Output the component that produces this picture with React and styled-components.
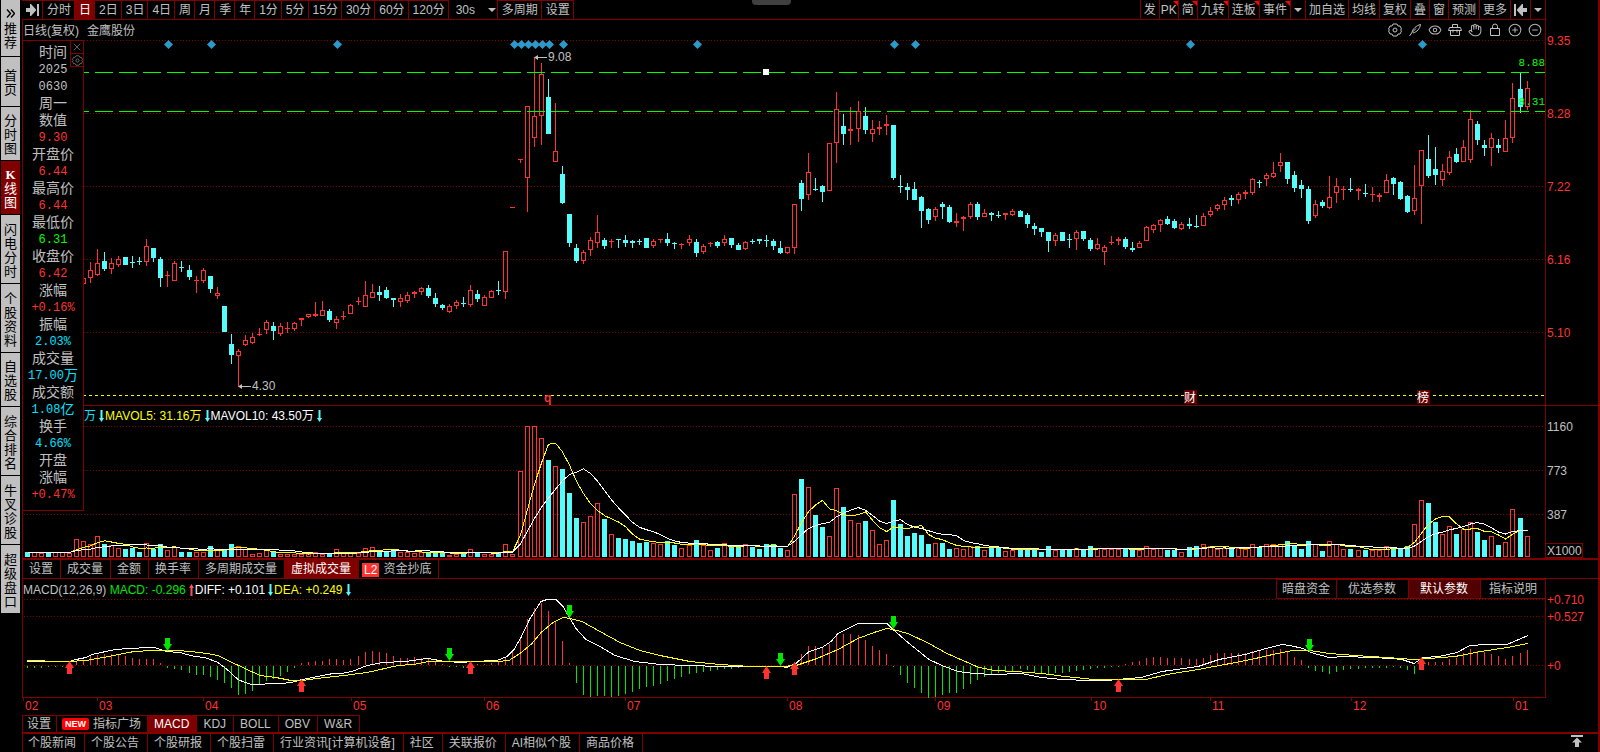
import { useLayoutEffect, useRef, useState } from 'react'
import styled, { createGlobalStyle } from 'styled-components'
import { Eye, Hand, CirclePlus, CircleMinus, X } from 'lucide-react'

const RED = '#ff3232'
const CYAN = '#54fcfc'
const GREEN = '#00e600'
const LINE = '#800000'
const GRAY = '#c0c0c0'

const GlobalStyle = createGlobalStyle`
  * {
    box-sizing: border-box;
  }
  body {
    margin: 0;
    background: #000;
    color: ${GRAY};
    font: 12px/18px "Liberation Sans", "Noto Sans CJK SC", sans-serif;
  }
  button {
    margin: 0;
    padding: 0;
    border: 0;
    background: none;
    color: inherit;
    font: inherit;
    white-space: nowrap;
    cursor: pointer;
  }
`

const Page = styled.div`
  display: flex;
  min-height: 100vh;
  background: #000;
  border-right: 2px solid ${LINE};
`

const Rail = styled.nav`
  flex: none;
  width: 22px;
  padding: 0 2px 0 1px;
`

const RailButton = styled.button`
  display: flex;
  flex-direction: column;
  align-items: center;
  justify-content: center;
  width: 19px;
  height: ${p => p.$height}px;
  padding-top: 3px;
  border-bottom: 1px solid #000;
  background: ${p => (p.$active ? LINE : GRAY)};
  color: ${p => (p.$active ? '#fff' : '#000')};
  font-size: 13px;
  line-height: 14px;

  b {
    font-family: "Liberation Serif", serif;
  }
  svg {
    margin-bottom: 4px;
  }
`

const Main = styled.main`
  flex: 1;
  min-width: 0;
  display: flex;
  flex-direction: column;
`

const Toolbar = styled.header`
  display: flex;
  justify-content: space-between;
  height: 20px;
  margin-right: 52px;
  border-bottom: 1px solid ${LINE};
  border-right: 1px solid ${LINE};
`

const Group = styled.div`
  display: flex;
  position: relative;
`

const ToolButton = styled.button`
  display: flex;
  align-items: center;
  position: relative;
  padding: 0 ${p => (p.$tight ? 1 : 3)}px;
  border-right: ${p => (p.$right ? 0 : 1)}px solid ${LINE};
  border-left: ${p => (p.$right ? 1 : 0)}px solid ${LINE};
  border-top: ${p => (p.$right ? 0 : 1)}px solid ${LINE};
  background: ${p => (p.$active ? LINE : 'transparent')};
  color: ${p => (p.$active ? '#fff' : GRAY)};
  line-height: 18px;
  ${p => !p.$right && 'padding-left: 4px;'}

  ${p => p.$corner && `
    &::after {
      content: '';
      position: absolute;
      top: 1px;
      right: 0;
      border-top: 5px solid #ff0000;
      border-left: 5px solid transparent;
    }
  `}
`

const PeriodButton = styled(ToolButton)`
  width: 49px;
  padding: 0 1px 0 7px;
  justify-content: space-between;
  border-top: 0;
`

const Caret = styled.i`
  border: 4px solid transparent;
  border-top-color: ${GRAY};
  border-bottom: 0;
`

const Handle = styled.div`
  position: absolute;
  top: 0;
  left: 47%;
  width: 39px;
  height: 5px;
  border-radius: 0 0 4px 4px;
  background: #404040;
`

const Stage = styled.section`
  position: relative;
`

const PaneHead = styled.div`
  display: flex;
  align-items: center;
  height: ${p => p.$height}px;
  margin-right: 52px;
  padding-left: ${p => p.$indent || 0}px;
  border-left: 1px solid ${LINE};
  border-right: 1px solid ${LINE};
  white-space: nowrap;
`

const Title = styled.h1`
  display: flex;
  gap: 8px;
  margin: 0;
  padding-top: 2px;
  font-size: 12px;
  font-weight: 400;
`

const IconRow = styled.div`
  display: flex;
  gap: 6px;
  margin-left: auto;
  padding-right: 3px;

  button {
    display: flex;
    width: 14px;
  }
`

const Legend = styled.span`
  display: inline-flex;
  align-items: center;
  padding-top: 1px;
  color: ${p => p.$color};

  svg {
    margin: 0 1px 0 3px;
  }
`

const Plot = styled.div`
  height: ${p => p.$height}px;
  border-left: ${p => (p.$open ? 0 : 1)}px solid ${LINE};
  padding-left: ${p => (p.$open ? 1 : 0)}px;

  svg {
    display: block;
    overflow: visible;
  }
`

const Rule = styled.div`
  height: ${p => p.$size || 1}px;
  background: ${LINE};
`

const DataPanel = styled.aside`
  position: absolute;
  top: 20px;
  left: 0;
  width: 62px;
  height: 471px;
  padding-top: 3px;
  border: 1px solid ${LINE};
  background: #000;
  text-align: center;

  dl, dt, dd {
    margin: 0;
  }
  dl {
    font-size: 14px;
    line-height: 17px;
  }
`

const PanelButtons = styled.div`
  position: absolute;
  top: -1px;
  right: -1px;
  width: 14px;

  button {
    display: flex;
    align-items: center;
    justify-content: center;
    width: 14px;
    height: 14px;
    margin-bottom: -1px;
    border: 1px solid ${LINE};
    color: #808080;
  }
`

const PanelValue = styled.dd`
  height: 17px;
  color: ${p => p.$color || GRAY};
  font: 12px/19px "Liberation Mono", "Noto Sans CJK SC", monospace;

  span {
    font-size: 14px;
    vertical-align: top;
  }
`

const TabRow = styled.div`
  display: flex;
  height: ${p => p.$height}px;
`

const Tab = styled.button`
  display: flex;
  align-items: center;
  gap: 4px;
  padding: 1px ${p => (p.$pad || 6) + 1}px 0 ${p => p.$pad || 6}px;
  border: 0 solid ${LINE};
  border-right-width: 1px;
  background: ${p => (p.$active ? LINE : 'transparent')};
  color: ${p => (p.$active ? '#fff' : GRAY)};
  line-height: 17px;

  &:first-child {
    border-left-width: 1px;
  }
`

const IndicatorTabs = styled(TabRow)`
  button {
    padding-top: 0;
    border-top-width: 1px;
  }
`

const NewsTab = styled(Tab)`
  padding: 1px 8px 0 6px;
  &:first-child {
    padding-left: 5px;
  }
`

const L2 = styled.span`
  padding: 0 2px;
  margin-left: -3px;
  background: ${RED};
  color: #fff;
  line-height: 14px;
`

const NewBadge = styled.span`
  padding: 0 3px;
  border-radius: 2px;
  background: #ff0000;
  color: #fff;
  font-size: 9px;
  font-weight: 700;
  line-height: 12px;
`

const ParamButtons = styled.div`
  display: flex;
  align-self: stretch;
  margin-left: auto;

  button {
    padding: 0 8px;
    border: 1px solid ${LINE};
    border-right-width: 0;
    line-height: 19px;
  }
  button:first-child {
    padding: 0 6px 0 5px;
  }
  button:nth-child(2) {
    padding: 0 12px 0 11px;
  }
  button:nth-child(3) {
    padding: 0 12px 0 11px;
    background: #500000;
    color: #fff;
  }
`

const Footer = styled.footer`
  display: flex;
  justify-content: space-between;
  height: 18px;
  padding-right: 15px;
`

// [high, bodyTop, bodyBottom, low, up] in pane units, from the 9th bar on
const CANDLES = [
  [276,278,284,285,1],[262,270,278,283,1],[249,263,275,276,1],[252,261,269,271,0],[258,263,269,274,1],
  [256,259,265,267,1],[257,257,265,265,0],[256,262,263,268,0],[257,261,262,265,0],[239,246,262,266,1],
  [248,248,258,262,0],[257,259,278,287,0],[271,275,276,287,1],[261,263,281,281,1],[261,267,268,272,0],
  [265,270,277,280,0],[276,280,281,293,1],[268,270,281,283,1],[276,276,289,293,0],[287,293,296,299,1],
  [306,306,332,332,0],[334,344,355,364,0],[349,351,356,387,1],[335,340,345,346,1],[333,337,343,344,1],
  [328,334,335,336,1],[320,322,330,334,1],[322,326,331,340,0],[323,326,334,336,1],[322,328,329,333,1],
  [322,323,329,331,1],[318,318,320,326,1],[314,314,317,318,1],[302,314,316,317,1],[301,310,316,316,1],
  [309,311,320,322,0],[316,319,323,329,1],[311,316,317,320,1],[304,305,314,314,1],[297,301,302,305,1],
  [281,295,307,307,1],[284,292,298,298,1],[286,292,295,301,0],[287,290,298,299,0],[298,298,300,307,0],
  [294,298,302,307,1],[292,295,301,303,1],[291,292,294,298,1],[287,288,292,295,1],[285,288,296,298,0],
  [293,298,304,307,0],[304,305,308,310,0],[304,306,312,313,1],[300,302,306,309,1],[297,303,304,307,0],
  [285,290,305,307,1],[290,294,299,302,0],[295,297,306,306,1],[290,291,298,298,1],[281,290,291,295,0],
  [251,251,292,299,1],[207,207,208,208,1],[159,159,160,163,1],[106,106,178,212,1],[57,116,138,147,1],
  [63,74,116,145,1],[79,97,134,134,0],[103,151,162,162,1],[166,174,203,204,0],[214,214,243,247,0],
  [244,248,261,263,0],[250,252,261,264,1],[237,240,250,256,1],[215,232,243,248,1],[238,240,246,249,0],
  [239,241,242,248,1],[239,239,240,248,0],[235,240,243,247,0],[240,241,243,248,0],[239,241,242,245,0],
  [238,238,248,248,0],[239,241,246,248,1],[239,239,240,243,1],[233,239,243,246,0],[242,243,244,249,0],
  [243,244,245,249,1],[235,239,243,246,1],[239,242,253,257,0],[244,246,252,254,1],[242,243,244,247,1],
  [241,242,246,248,0],[235,239,243,246,1],[238,238,245,248,0],[243,245,250,250,0],[241,242,249,250,1],
  [239,241,242,244,0],[239,239,241,244,0],[235,240,241,247,0],[239,241,246,250,0],[241,248,253,254,0],
  [247,247,253,254,1],[204,204,248,254,1],[180,183,199,211,0],[153,172,195,200,1],[178,189,190,191,0],
  [185,186,192,202,0],[143,143,191,191,1],[92,109,143,163,1],[114,126,134,145,0],[107,129,131,145,1],
  [101,111,129,142,1],[107,116,130,134,0],[120,129,134,142,1],[121,127,129,135,1],[115,124,126,135,1],
  [125,125,178,180,0],[175,186,187,193,0],[183,187,190,200,0],[182,189,200,200,0],[196,197,211,228,0],
  [208,209,220,224,0],[207,209,217,221,1],[202,204,207,219,0],[205,207,222,223,0],[213,221,223,227,1],
  [216,217,219,231,1],[202,204,217,219,1],[202,204,217,220,0],[209,213,217,217,1],[212,213,215,221,0],
  [211,215,216,218,0],[213,213,215,220,1],[209,211,215,216,1],[210,211,217,217,0],[213,215,224,228,0],
  [223,226,229,235,0],[228,228,232,237,0],[232,232,241,252,0],[233,235,241,246,1],[232,232,241,241,0],
  [234,239,240,248,0],[230,232,239,250,1],[231,231,239,241,0],[238,240,249,251,0],[238,244,249,250,1],
  [245,247,252,265,1],[236,242,243,245,1],[237,239,241,245,1],[237,239,247,249,0],[242,248,250,252,0],
  [241,243,248,248,1],[226,227,241,241,1],[224,225,230,233,1],[219,220,225,232,1],[216,219,224,225,0],
  [219,221,228,229,0],[222,224,229,230,1],[218,224,226,229,0],[215,226,227,228,0],[213,216,226,226,1],
  [207,211,215,217,1],[204,205,209,211,1],[197,200,205,210,1],[195,198,200,206,0],[192,194,200,204,1],
  [190,192,194,199,1],[178,179,193,195,1],[180,182,183,188,0],[173,175,179,186,1],[162,173,177,178,1],
  [153,162,166,172,1],[162,162,179,184,0],[171,175,188,192,0],[180,185,189,198,0],[186,189,221,224,0],
  [200,204,216,218,1],[200,202,206,208,0],[176,197,208,209,1],[178,186,193,203,1],[186,189,190,200,1],
  [178,189,190,192,0],[188,189,191,200,1],[184,193,194,197,0],[187,194,195,202,1],[193,195,197,202,1],
  [174,180,193,193,1],[177,178,184,195,0],[181,182,199,200,0],[195,196,212,213,0],[165,198,211,215,1],
  [150,150,186,224,1],[135,159,176,178,0],[147,169,175,185,0],[164,171,180,186,1],[151,157,173,175,1],
  [148,154,162,163,0],[140,147,162,162,1],[110,119,160,163,1],[121,124,140,145,0],[140,145,148,156,0],
  [133,138,148,166,1],[139,145,148,153,0],[120,138,152,152,1],[83,98,138,143,1],[72,89,107,113,0],
  [81,88,107,110,1]
]
const FIRST = 8
const HIDDEN_UP = [0, 1, 1, 0, 1, 1, 1, 1]

const VOLUMES = [
  5,5,4,4,5,5,4,18,16,13,21,13,12,9,8,9,5,14,8,13,7,10,5,5,5,5,11,7,7,13,
  11,8,3,4,7,5,3,3,3,3,3,5,3,3,8,4,4,4,9,10,7,6,6,5,5,4,5,4,4,5,
  2,3,4,8,4,3,3,4,13,3,86,131,131,119,97,91,88,64,39,35,41,54,38,23,19,18,16,14,15,14,
  13,16,12,9,12,17,12,7,9,14,10,10,13,10,8,13,13,9,7,63,78,70,42,30,21,69,50,37,34,36,
  27,13,17,57,33,21,24,22,13,14,14,8,9,8,11,11,7,10,9,6,7,7,9,7,5,11,7,7,7,9,
  7,11,9,8,8,8,8,7,7,11,8,9,7,7,5,10,11,13,11,8,9,8,9,8,13,10,13,13,13,16,
  12,8,16,13,6,16,13,8,8,7,7,7,7,11,9,9,11,33,57,54,35,23,31,23,28,35,25,17,21,12,
  15,48,39,21
]

const DIFF = [
  [27,661],[69,661],[76,659],[86,657],[92,654],[115,649],[130,648],[149,647],[154,647],[161,649],[166,651],
  [180,652],[187,654],[195,656],[205,657],[218,662],[226,668],[238,679],[245,682],[252,684],[262,684],
  [268,683],[281,683],[291,682],[302,679],[318,676],[333,673],[341,673],[352,671],[367,665],[383,662],
  [406,661],[427,658],[434,659],[444,661],[463,662],[471,661],[497,660],[507,656],[514,649],[521,637],
  [530,618],[541,601],[547,599],[556,599],[563,606],[570,618],[576,628],[586,639],[600,646],[615,655],
  [635,661],[660,664],[690,665],[720,666],[780,666],[787,667],[796,663],[809,651],[822,647],[831,641],
  [838,633],[858,623],[887,623],[893,629],[908,642],[929,659],[942,665],[958,671],[974,673],[994,674],
  [1021,673],[1042,677],[1062,679],[1089,680],[1107,680],[1117,679],[1141,677],[1162,671],[1198,666],
  [1219,659],[1245,654],[1266,648],[1282,644],[1290,645],[1303,648],[1311,652],[1329,657],[1345,656],
  [1371,657],[1392,658],[1402,659],[1414,663],[1423,657],[1439,656],[1457,652],[1470,645],[1486,644],
  [1507,644],[1528,635]
]

const DEA = [
  [27,660],[44,660],[46,661],[69,661],[86,660],[103,657],[119,654],[134,651],[153,650],[176,650],[191,651],
  [207,653],[218,655],[230,661],[245,668],[260,675],[276,677],[291,680],[302,680],[325,677],[344,675],
  [367,672],[398,665],[413,664],[429,661],[497,661],[509,660],[520,653],[532,643],[541,632],[553,622],
  [563,617],[570,618],[582,621],[600,631],[620,642],[640,650],[660,655],[690,661],[720,664],[750,666],
  [780,666],[796,665],[817,658],[838,649],[858,638],[874,632],[887,628],[893,629],[908,633],[929,643],
  [947,653],[963,660],[979,667],[994,670],[1015,671],[1042,673],[1065,676],[1094,679],[1120,679],
  [1146,679],[1167,674],[1198,669],[1225,664],[1251,659],[1277,653],[1293,650],[1310,650],[1329,653],
  [1355,655],[1387,657],[1413,659],[1429,658],[1455,656],[1481,651],[1507,647],[1528,643]
]

const EVENTS = [168, 211, 337, 514, 521, 528, 535, 542, 549, 563, 697, 894, 915, 1190, 1422]
const BUYS = [[69, 661], [301, 679], [470, 661], [766, 666], [794, 662], [1118, 679], [1421, 657]]
const SELLS = [[167, 651], [449, 661], [569, 618], [780, 666], [893, 629], [1309, 652]]
const MONTHS = [
  [23, '02'], [97, '03'], [203, '04'], [351, '05'], [484, '06'], [625, '07'],
  [787, '08'], [935, '09'], [1091, '10'], [1210, '11'], [1351, '12'], [1513, '01']
]

const AXIS = 53
const average = (list, n) => list.map((_, i) => {
  const part = list.slice(Math.max(0, i - n + 1), i + 1)
  return part.reduce((a, b) => a + b, 0) / part.length
})

const valueAt = (points, x) => {
  const i = Math.max(1, points.findIndex(p => p[0] >= x))
  const [x0, y0] = points[i - 1]
  const [x1, y1] = points[i]
  return y0 + (y1 - y0) * (x - x0) / (x1 - x0)
}

const Chart = ({ top, height, open, label, children }) => {
  const ref = useRef(null)
  const [width, setWidth] = useState(0)

  useLayoutEffect(() => {
    const measure = () => setWidth(ref.current.clientWidth - (open ? 1 : 0))
    measure()
    window.addEventListener('resize', measure)
    return () => window.removeEventListener('resize', measure)
  }, [open])

  const plot = Math.max(0, width - AXIS)
  const scale = {
    plot,
    bar: i => Math.floor(4.05 + i * (plot - 22) / 213),
    x: v => Math.round((v - 23) * plot / 1522)
  }

  return (
    <Plot ref={ref} $height={height} $open={open}>
      {width > 0 &&
        <svg width={width} height={height} viewBox={`0 ${top} ${width} ${height}`} role="img" aria-label={label}>
          {children(scale)}
        </svg>
      }
    </Plot>
  )
}

const Grid = ({ plot, lines, color }) => lines.map(([y, text]) =>
  <g key={y}>
    <path d={`M1 ${y + .5}H${plot}`} stroke={LINE} strokeDasharray="1 2" shapeRendering="crispEdges" />
    <text x={plot + 2} y={y + 5} fill={color}>{text}</text>
  </g>
)

const Curve = ({ points, color }) => (
  <polyline
    points={points.map(p => p.join()).join(' ')}
    fill="none"
    stroke={color}
    shapeRendering="crispEdges"
  />
)

const PriceChart = () => (
  <Chart top={40} height={365} label="日线">
    {({ plot, bar, x }) => <>
      <Grid plot={plot} color={RED} lines={[[40, '9.35'], [113, '8.28'], [186, '7.22'], [259, '6.16'], [332, '5.10']]} />
      <g shapeRendering="crispEdges">
        <path d={`M${plot + .5} 40V405`} stroke={LINE} />
        <path d={`M0 395.5H${plot}`} stroke="#ffff00" strokeDasharray="3 3" />
        {CANDLES.map(([hi, top, bottom, lo, up], n) => {
          const cx = bar(n + FIRST)
          const color = up ? RED : CYAN
          const hollow = up && bottom - top > 2
          return (
            <g key={n} fill={color}>
              <rect x={cx} y={hi} width="1" height={top - hi} />
              <rect x={cx} y={bottom} width="1" height={lo - bottom} />
              {hollow
                ? <rect x={cx - 1.5} y={top + .5} width="4" height={bottom - top - 1} fill="none" stroke={color} />
                : <rect x={cx - 2} y={top} width="5" height={bottom - top} />}
            </g>
          )
        })}
        <path d={`M0 72.5H${plot}M0 111.5H${plot}`} stroke="#00ff00" strokeDasharray="18 6" />
        <rect x={x(763)} y="69" width="6" height="6" fill="#fff" />
      </g>
      {EVENTS.map(v =>
        <path key={v} d={`M${x(v) + .5} 40l4.500 4.500l-4.500 4.500l-4.500 -4.500z`} fill="#2a9acb" />
      )}
      <g fill={GRAY} stroke="none">
        <path d={`M${x(534)} 57.500l4 -2.500v2h9v1h-9v2z`} />
        <text x={x(548)} y="61">9.08</text>
        <path d={`M${x(238)} 386.500l4 -2.500v2h9v1h-9v2z`} />
        <text x={x(252)} y="390">4.30</text>
      </g>
      <g fill="#00ff00" fontFamily="Liberation Mono, monospace" fontSize="11" textAnchor="end">
        <text x={plot} y="66">8.88</text>
        <text x={plot} y="105">8.31</text>
      </g>
      <text x={x(544)} y="402" fill={RED} fontWeight="700">q</text>
      {[[1184, '财'], [1417, '榜']].map(([v, text]) =>
        <g key={v}>
          <rect x={x(v)} y="390" width="13" height="14" fill="#600000" />
          <text x={x(v)} y="402" fill="#fff">{text}</text>
        </g>
      )}
    </>}
  </Chart>
)

const VolumeChart = () => (
  <Chart top={424} height={134} label="成交量">
    {({ plot, bar }) => <>
      <Grid plot={plot} color={GRAY} lines={[[426, '1160'], [470, '773'], [514, '387']]} />
      <g shapeRendering="crispEdges">
        <path d={`M${plot + .5} 424V558`} stroke={LINE} />
        <rect x={plot + .5} y="543.5" width="37" height="14" fill="none" stroke={LINE} />
        {VOLUMES.map((h, i) => {
          const up = i < FIRST ? HIDDEN_UP[i] : CANDLES[i - FIRST][4]
          return up
            ? <rect key={i} x={bar(i) - 1.5} y={557.5 - h} width="4" height={h - 1} fill="none" stroke={RED} />
            : <rect key={i} x={bar(i) - 2} y={557 - h} width="5" height={h} fill={CYAN} />
        })}
      </g>
      <text x={plot + 2} y="555" fill={GRAY}>X1000</text>
      <Curve color="#ffff00" points={average(VOLUMES, 5).map((v, i) => [bar(i) + .5, 557 - v])} />
      <Curve color="#fff" points={average(VOLUMES, 10).map((v, i) => [bar(i) + .5, 557 - v])} />
    </>}
  </Chart>
)

const MacdChart = () => (
  <Chart top={599} height={116} open label="MACD">
    {({ plot, bar, x }) => <>
      <Grid plot={plot} color={RED} lines={[[599, '+0.710'], [616, '+0.527'], [665, '+0']]} />
      <g shapeRendering="crispEdges">
        <path d={`M-.5 599V697.500H${plot + .5}V599`} fill="none" stroke={LINE} />
        {VOLUMES.map((_, i) => {
          const px = 27 + i * 7.042
          const h = Math.round((valueAt(DEA, px) - valueAt(DIFF, px)) * 2)
          return <rect key={i} x={bar(i)} y={h > 0 ? 665 - h : 666} width="1" height={Math.max(1, Math.abs(h))} fill={h > 0 ? RED : GREEN} />
        })}
        {MONTHS.map(([v]) => <rect key={v} x={x(v)} y="698" width="1" height="3" fill={LINE} />)}
      </g>
      <Curve color="#fff" points={DIFF.map(([v, y]) => [x(v), y + .5])} />
      <Curve color="#ffff00" points={DEA.map(([v, y]) => [x(v), y + .5])} />
      {BUYS.map(([v, y]) =>
        <path key={v} d={`M${x(v) + .5} ${y}l4.500 7h-2v6h-5v-6h-2z`} fill={RED} />
      )}
      {SELLS.map(([v, y]) =>
        <path key={v} d={`M${x(v) + .5} ${y}l4.500 -7h-2v-6h-5v6h-2z`} fill={GREEN} />
      )}
      {MONTHS.map(([v, text]) => <text key={v} x={x(v) + 2} y="710" fill={RED}>{text}</text>)}
    </>}
  </Chart>
)

const Trend = ({ up }) => (
  <svg width="5" height="12" viewBox="0 0 5 12" fill={up ? '#ff5454' : '#54fcfc'} aria-hidden="true">
    <path d={up ? 'M2.500 0L5 4H3.500V12H1.500V4H0z' : 'M2.500 12L5 8H3.500V0H1.500V8H0z'} />
  </svg>
)

const JumpIcon = ({ flip }) => (
  <svg width="13" height="12" viewBox="0 0 13 12" fill={GRAY} aria-hidden="true">
    <path transform={flip ? 'rotate(180 6.500 6)' : undefined} d="M0 4h4V0h1l5 5.500v1L5 12H4V8H0zM11 0h2v12h-2z" />
  </svg>
)

const LineIcon = ({ size = 14, children }) => (
  <svg width={size} height={size} viewBox="0 0 14 14" fill="none" stroke="currentColor" aria-hidden="true">
    {children}
  </svg>
)

const GearIcon = ({ size }) => (
  <LineIcon size={size}>
    <path d="M5 1h4l1 2l2 0l1.500 3l-1 1l1 1l-1.500 3l-2 0l-1 2H5l-1 -2l-2 0l-1.500 -3l1 -1l-1 -1L2 3l2 0z" />
    <circle cx="7" cy="7" r="2" />
  </LineIcon>
)

const PenIcon = () => (
  <LineIcon>
    <path d="M1.500 13L4 9.500C4.500 6 8.500 2.500 12.500 1.500C12 5.500 9 9 5 10M4 9.500l4 -4" />
  </LineIcon>
)

const ToolboxIcon = () => (
  <LineIcon>
    <path d="M4.500 4V1.500h5V4M1.500 4.500h11l1 3h-13zM2.500 7.500v5h9v-5M5 6.500v3M9 6.500v3" />
  </LineIcon>
)

const LockIcon = () => (
  <LineIcon>
    <path d="M2.500 5.500h9v7h-9zM4.500 5.500V3.500a2.500 2.500 0 0 1 5 0v2" />
  </LineIcon>
)

const rail = [
  ['推荐', 57], ['首页', 50], ['分时图', 54], ['K线图', 54], ['闪电分时', 69], ['个股资料', 69],
  ['自选股', 54], ['综合排名', 69], ['牛叉诊股', 69], ['超级盘口', 69]
]

const periods = [
  '分时', '日', '2日', '3日', '4日', '周', '月', '季', '年',
  '1分', '5分', '15分', '30分', '60分', '120分'
]

const flagged = ['PK', '简', '九转', '连板', '事件']

const values = [
  ['时间', '2025'], [null, '0630'], ['周一'], ['数值', '9.30', RED], ['开盘价', '6.44', RED],
  ['最高价', '6.44', RED], ['最低价', '6.31', '#00ff00'], ['收盘价', '6.42', RED], ['涨幅', '+0.16%', RED],
  ['振幅', '2.03%', '#00e0ff'], ['成交量', '17.00', '#00e0ff', '万'], ['成交额', '1.08', '#00e0ff', '亿'],
  ['换手', '4.66%', '#00e0ff'], ['开盘'], ['涨幅', '+0.47%', RED]
]

const tools = [
  ['设置', GearIcon], ['画线', PenIcon], ['显示', Eye], ['工具箱', ToolboxIcon],
  ['拖动', Hand], ['锁定', LockIcon], ['放大', CirclePlus], ['缩小', CircleMinus]
]

const news = [
  '个股新闻', '个股公告', '个股研报', '个股扫雷', '行业资讯[计算机设备]', '社区', '关联报价', 'AI相似个股', '商品价格'
]

const App = () => {
  const [panelOpen, setPanelOpen] = useState(true)

  return (
    <Page>
      <GlobalStyle />
      <Rail>
        {rail.map(([name, height], i) =>
          <RailButton key={name} $height={height} $active={name === 'K线图'}>
            {i === 0 &&
              <svg width="9" height="9" viewBox="0 0 9 9" fill="none" stroke="#000" strokeWidth="1.4" aria-hidden="true">
                <path d="M1 .5l3.500 4L1 8.500M5 .5l3.500 4L5 8.500" />
              </svg>
            }
            {[...name].map(c => c === 'K' ? <b key={c}>{c}</b> : <span key={c}>{c}</span>)}
          </RailButton>
        )}
      </Rail>
      <Main>
        <Toolbar>
          <Group>
            <ToolButton aria-label="展开"><JumpIcon /></ToolButton>
            {periods.map(name =>
              <ToolButton key={name} $active={name === '日'}>{name}</ToolButton>
            )}
            <PeriodButton>30s<Caret /></PeriodButton>
            <ToolButton>多周期</ToolButton>
            <ToolButton>设置</ToolButton>
          </Group>
          <Group>
            <ToolButton $right>发</ToolButton>
            {flagged.map(name =>
              <ToolButton key={name} $right $corner $tight={name === 'PK'}>{name}</ToolButton>
            )}
            <ToolButton $right aria-label="更多事件"><Caret /></ToolButton>
            {['加自选', '均线', '复权', '叠', '窗', '预测', '更多'].map(name =>
              <ToolButton key={name} $right>{name}</ToolButton>
            )}
            <ToolButton $right aria-label="收起"><JumpIcon flip /></ToolButton>
            <ToolButton $right aria-label="菜单"><Caret /></ToolButton>
          </Group>
        </Toolbar>
        <Handle />

        <Stage>
          <PaneHead $height={20}>
            <Title><span>日线(复权)</span><span>金鹰股份</span></Title>
            <IconRow>
              {tools.map(([name, Icon]) =>
                <button key={name} aria-label={name}><Icon size={14} strokeWidth={1.8} color="#b0b0b0" /></button>
              )}
            </IconRow>
          </PaneHead>
          <PriceChart />
          <Rule />
          <PaneHead $height={18} $indent={61}>
            <Legend $color="#00e0ff">万<Trend /></Legend>
            <Legend $color="#ffff00">MAVOL5: 31.16万<Trend /></Legend>
            <Legend $color="#fff">MAVOL10: 43.50万<Trend /></Legend>
          </PaneHead>
          <VolumeChart />
          {panelOpen &&
            <DataPanel>
              <PanelButtons>
                <button aria-label="关闭" onClick={() => setPanelOpen(false)}><X size={12} strokeWidth={1.5} /></button>
                <button aria-label="设置"><GearIcon size={11} /></button>
              </PanelButtons>
              <dl>
                {values.map(([name, value, color, unit], i) =>
                  <div key={i}>
                    {name && <dt>{name}</dt>}
                    {value && <PanelValue $color={color}>{value}{unit && <span>{unit}</span>}</PanelValue>}
                  </div>
                )}
              </dl>
            </DataPanel>
          }
        </Stage>

        <Rule $size={2} />
        <TabRow $height={18}>
          {['设置', '成交量', '金额', '换手率', '多周期成交量', '虚拟成交量'].map(name =>
            <Tab key={name} $active={name === '虚拟成交量'}>{name}</Tab>
          )}
          <Tab><L2>L2</L2>资金抄底</Tab>
        </TabRow>
        <Rule />

        <PaneHead $height={20}>
          <Legend $color={GRAY}>MACD(12,26,9)&nbsp;</Legend>
          <Legend $color={GREEN}>MACD: -0.296<Trend up /></Legend>
          <Legend $color="#fff">DIFF: +0.101<Trend /></Legend>
          <Legend $color="#ffff00">DEA: +0.249<Trend /></Legend>
          <ParamButtons>
            <button>暗盘资金</button>
            <button>优选参数</button>
            <button>默认参数</button>
            <button>指标说明</button>
          </ParamButtons>
        </PaneHead>
        <MacdChart />

        <IndicatorTabs $height={17}>
          <Tab $pad={4}>设置</Tab>
          <Tab $pad={5}><NewBadge>NEW</NewBadge>指标广场</Tab>
          <Tab $active>MACD</Tab>
          {['KDJ', 'BOLL', 'OBV', 'W&R'].map(name => <Tab key={name}>{name}</Tab>)}
        </IndicatorTabs>
        <Rule $size={2} />
        <Footer>
          <TabRow $height={18}>
            {news.map(name => <NewsTab key={name}>{name}</NewsTab>)}
          </TabRow>
          <button aria-label="向上展开">
            <svg width="12" height="12" viewBox="0 0 12 12" fill={GRAY} aria-hidden="true">
              <path d="M0 0h12v2H0zM6 2.500l5 5H8V12H4V7.500H1z" />
            </svg>
          </button>
        </Footer>
      </Main>
    </Page>
  )
}

export default App
